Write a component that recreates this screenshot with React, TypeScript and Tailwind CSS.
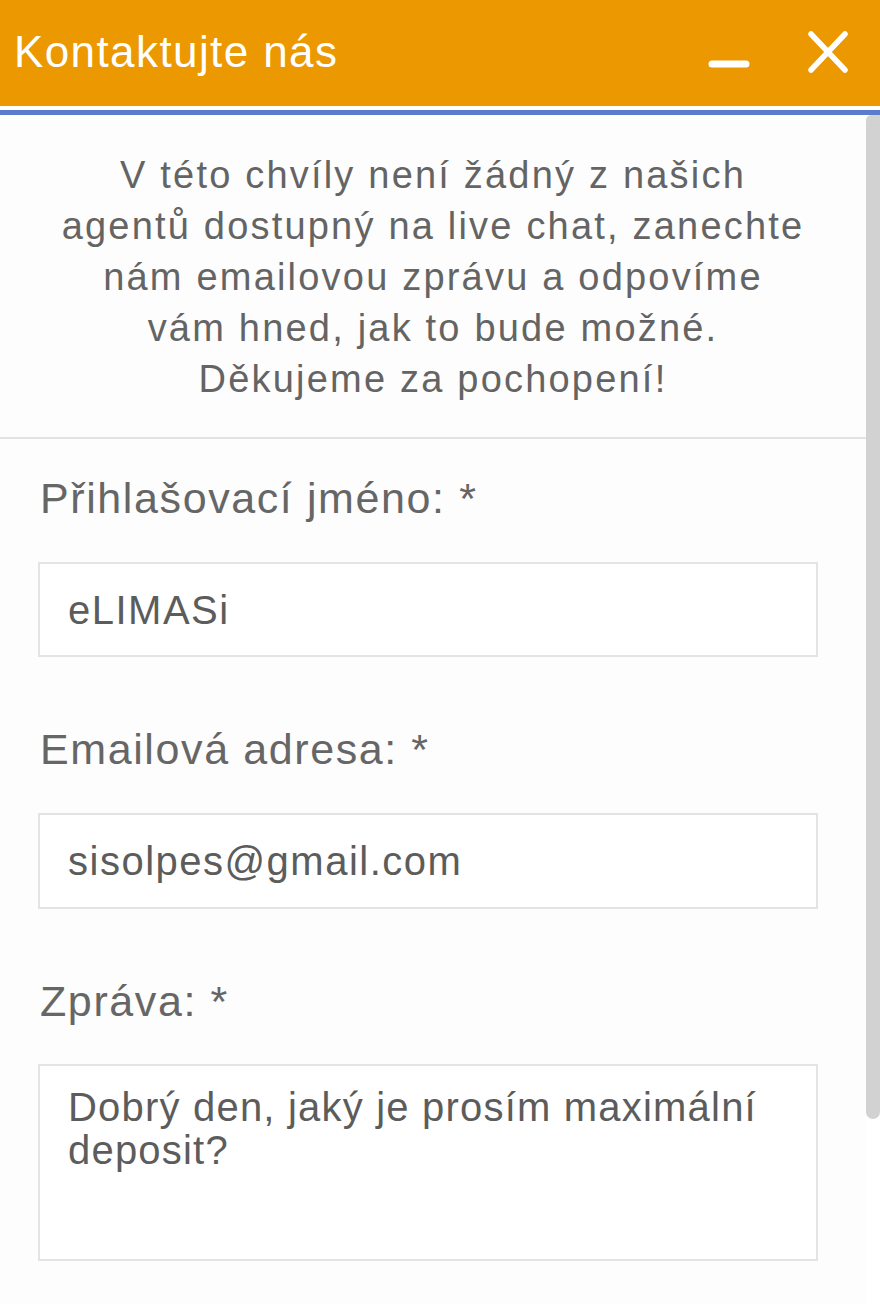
import React from "react";

const font = { fontFamily: '"Liberation Sans", Arial, sans-serif' };

export default function App() {
  return (
    <div
      className="w-[880px] h-[1304px] bg-white flex flex-col overflow-hidden"
      style={font}
    >
      <div className="h-[106px] bg-[#ec9800] flex items-center justify-between pl-[14px] pr-[30px]">
        <div className="text-white text-[44px] leading-none tracking-[1.4px] mt-[-2px]">
          Kontaktujte nás
        </div>
        <div className="flex items-center gap-[56px]">
          <svg width="42" height="10" viewBox="0 0 42 10" className="mt-[22px]">
            <line x1="4" y1="5" x2="38" y2="5" stroke="white" strokeWidth="7" strokeLinecap="round" />
          </svg>
          <svg width="44" height="46" viewBox="0 0 44 46" className="mt-[-2px]">
            <line x1="5" y1="5" x2="39" y2="41" stroke="white" strokeWidth="5.5" strokeLinecap="round" />
            <line x1="39" y1="5" x2="5" y2="41" stroke="white" strokeWidth="5.5" strokeLinecap="round" />
          </svg>
        </div>
      </div>
      <div className="h-[4px] bg-white" />
      <div className="h-[5px] bg-[#5b7ccc]" />
      <div className="flex flex-1 bg-[#fdfdfd]">
        <div className="w-[866px] flex flex-col">
          <div className="pt-[35px] pb-[32px] px-[10px] text-center text-[#646464] text-[38px] leading-[51px] tracking-[2.2px]">
            <div>V této chvíly není žádný z našich</div>
            <div>agentů dostupný na live chat, zanechte</div>
            <div>nám emailovou zprávu a odpovíme</div>
            <div>vám hned, jak to bude možné.</div>
            <div>Děkujeme za pochopení!</div>
          </div>
          <div className="h-[2px] bg-[#e2e2e2]" />
          <div className="pl-[38px] pr-[48px] flex flex-col text-[#666]">
            <div className="mt-[34px] h-[50px] flex items-center pl-[2px] text-[43px] tracking-[1.6px]">
              Přihlašovací jméno: *
            </div>
            <div className="mt-[39px] h-[95px] border-2 border-[#e4e4e4] bg-white flex items-center pl-[28px] text-[40px] text-[#5c5c5c] tracking-[1.5px]">
              eLIMASi
            </div>
            <div className="mt-[67px] h-[50px] flex items-center pl-[2px] text-[43px] tracking-[1.6px]">
              Emailová adresa: *
            </div>
            <div className="mt-[39px] h-[96px] border-2 border-[#e4e4e4] bg-white flex items-center pl-[28px] text-[40px] text-[#5c5c5c] tracking-[1.5px]">
              sisolpes@gmail.com
            </div>
            <div className="mt-[67px] h-[50px] flex items-center pl-[2px] text-[43px] tracking-[1.6px]">
              Zpráva: *
            </div>
            <div className="mt-[38px] h-[197px] border-2 border-[#e4e4e4] bg-white pl-[28px] pt-[20px] text-[40px] leading-[43px] text-[#5c5c5c] tracking-[1.2px]">
              Dobrý den, jaký je prosím maximální
              <br />
              deposit?
            </div>
          </div>
        </div>
        <div className="w-[14px] bg-white">
          <div className="h-[1004px] bg-[#d2d2d2] rounded-b-[8px] rounded-tl-[6px]" />
        </div>
      </div>
    </div>
  );
}
